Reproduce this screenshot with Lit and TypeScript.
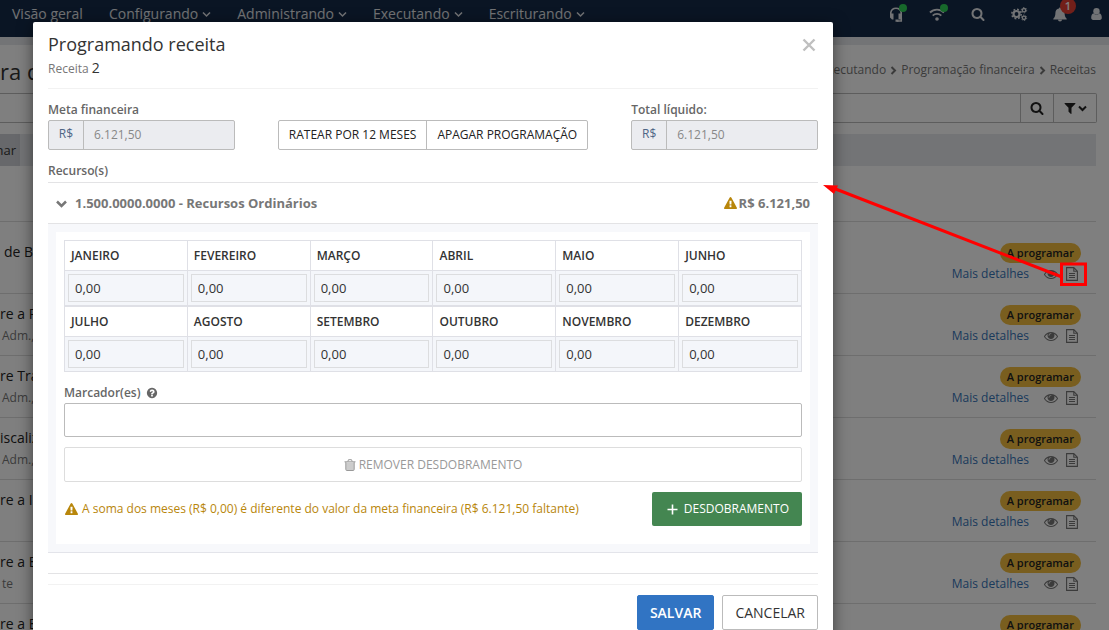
import { LitElement, html, css, svg, nothing } from "lit";
import { customElement } from "lit/decorators.js";

const PATHS: Record<string, string> = {
  search:
    "M1216 832q0-185-131.500-316.500T768 384 451.500 515.500 320 832t131.500 316.500T768 1280t316.500-131.500T1216 832zm512 832q0 52-38 90t-90 38q-54 0-90-38l-343-342q-179 124-399 124-143 0-273.500-55.500t-225-150-150-225T64 832t55.500-273.500 150-225 225-150T768 128t273.500 55.500 225 150 150 225T1472 832q0 220-124 399l343 343q37 37 37 90z",
  eye: "M1664 960q-152-236-381-353 61 104 61 225 0 185-131.500 316.500T896 1280t-316.500-131.500T448 832q0-121 61-225-229 117-381 353 133 205 333.500 326.500T896 1408t434.500-121.500T1664 960zm-720-384q0-20-14-34t-34-14q-125 0-214.500 89.500T592 832q0 20 14 34t34 14 34-14 14-34q0-86 61-147t147-61q20 0 34-14t14-34zm848 384q0 34-20 69-140 230-376.500 368.500T896 1536t-499.500-139T20 1029q-20-35-20-69t20-69q140-229 376.500-368T896 384t499.500 139T1772 891q20 35 20 69z",
  filter:
    "M1595 295q17 41-14 70l-493 493v742q0 42-39 59-13 5-25 5-27 0-45-19l-256-256q-19-19-19-45V858L211 365q-31-29-14-70 17-39 59-39h1280q42 0 59 39z",
  warning:
    "M1024 1375v-190q0-14-9.500-23.500t-22.500-9.500h-192q-13 0-22.500 9.500t-9.500 23.500v190q0 14 9.500 23.500t22.500 9.500h192q13 0 22.500-9.500t9.500-23.500zm-2-374l18-459q0-12-10-19-13-11-24-11h-220q-11 0-24 11-10 7-10 21l17 457q0 10 10 16.500t24 6.500h185q14 0 23.500-6.500t10.500-16.500zm-14-934l768 1408q35 63-2 126-17 29-46.500 46t-63.500 17h-1536q-34 0-63.500-17t-46.500-46q-37-63-2-126l768-1408q17-31 47-49t65-18 65 18 47 49z",
  question:
    "M1024 1376v-192q0-14-9-23t-23-9h-192q-14 0-23 9t-9 23v192q0 14 9 23t23 9h192q14 0 23-9t9-23zm256-672q0-88-55.500-163t-138.500-116-170-41q-243 0-371 213-15 24 8 42l132 100q7 6 19 6 16 0 25-12 53-68 86-92 34-24 86-24 48 0 85.500 26t37.500 59q0 38-20 61t-68 45q-63 28-115.500 86.500t-52.500 125.500v36q0 14 9 23t23 9h192q14 0 23-9t9-23q0-19 21.500-49.500t54.500-49.500q32-18 49-28.500t46-35 44.500-48 28-60.500 12.500-81zm384 192q0 209-103 385.500t-279.500 279.500-385.500 103-385.500-103-279.500-279.500-103-385.500 103-385.500 279.500-279.500 385.500-103 385.500 103 279.500 279.500 103 385.500z",
};

const solid = (name: string, size = 14) => html`<svg
  class="icon" width=${size} height=${size} viewBox="0 0 1792 1792" fill="currentColor" aria-hidden="true"
><path d=${PATHS[name]}></path></svg>`;

const drawn = (body: unknown, w: number, h: number) => html`<svg
  class="icon" width=${w} height=${h} viewBox="0 0 ${w} ${h}" fill="none" stroke="currentColor" aria-hidden="true"
>${body}</svg>`;

const chevronDown = (w = 9, stroke = 1.5) =>
  drawn(svg`<path d="M1 1.500L${w / 2} ${w / 2 + 0.5}L${w - 1} 1.500" stroke-width=${stroke}></path>`, w, 7);
const chevronRight = () => drawn(svg`<path d="M1.500 1L5 4.500L1.500 8" stroke-width="2"></path>`, 7, 9);

const headset = () =>
  drawn(
    svg`<path d="M1.800 8.500V6.500a5.300 5.300 0 0 1 10.400 0V8.500" stroke-width="1.600"></path>
      <path d="M1 7.500h3.500v6H3L1 11.500zM9.500 7.500h3.500v6H9.500z" fill="currentColor" stroke="none"></path>
      <path d="M12.300 12v3H8" stroke-width="1.500"></path><path d="M6.500 13.500h3v2.300h-3z" fill="currentColor" stroke="none"></path>`,
    14, 16
  );
const wifi = () =>
  drawn(
    svg`<path d="M1 5.500a10 10 0 0 1 14 0" stroke-width="1.900"></path>
      <path d="M3.700 8.600a6.200 6.200 0 0 1 8.600 0" stroke-width="1.900"></path>
      <circle cx="8" cy="12" r="1.800" fill="currentColor" stroke="none"></circle>`,
    16, 15
  );
const cogs = () =>
  drawn(
    svg`<circle cx="5.500" cy="7" r="3" stroke-width="2.200"></circle>
      <circle cx="5.500" cy="7" r="4.700" stroke-width="1.500" stroke-dasharray="1.850 1.840"></circle>
      <circle cx="13" cy="3.200" r="1.700" stroke-width="1.400"></circle>
      <circle cx="13" cy="3.200" r="2.700" stroke-width="0.900" stroke-dasharray="1.400 1.430"></circle>
      <circle cx="13" cy="10.800" r="1.700" stroke-width="1.400"></circle>
      <circle cx="13" cy="10.800" r="2.700" stroke-width="0.900" stroke-dasharray="1.400 1.430"></circle>`,
    16, 14
  );
const bell = () =>
  drawn(
    svg`<path d="M7 0.500c.7 0 1 .4 1 1 2.500.5 3.600 2.300 3.600 4.500 0 3 .8 4.600 2.100 5.700v.8H.3v-.8C1.600 10.600 2.400 9 2.400 6c0-2.200 1.100-4 3.600-4.500 0-.6.300-1 1-1zM5 12.800h4a2 1.700 0 0 1-4 0z" fill="currentColor" stroke="none"></path>`,
    14, 15
  );
const user = () =>
  drawn(
    svg`<circle cx="5.500" cy="3.300" r="3.200" fill="currentColor" stroke="none"></circle>
      <path d="M2.300 5.200C.8 5.800.2 7.500.2 9.800c0 1.300.8 2.200 2 2.200h6.600c1.200 0 2-.9 2-2.200 0-2.300-.6-4-2.100-4.600-1.700 1.700-4.700 1.700-6.400 0z" fill="currentColor" stroke="none"></path>`,
    11, 12
  );
const documentIcon = () =>
  drawn(
    svg`<path d="M.6.600h7.200L11.400 4.200V13.400H.6zM7.800.600V4.200h3.600M3 6.500h6M3 8.500h6M3 10.500h6" stroke-width="1.100"></path>`,
    12, 14
  );
const trash = () =>
  drawn(
    svg`<path d="M2 3.500h8v7.500h-8z" fill="currentColor" fill-opacity=".5" stroke="none"></path>
      <path d="M.5 2.800h11M3.800 2.500L4.500.7h3l.7 1.800M1.800 3v7.500q0 1 1 1h6.400q1 0 1-1V3" stroke-width="1"></path>`,
    12, 12
  );
const plus = () => drawn(svg`<path d="M5.500 .5v10M.5 5.500h10" stroke-width="1.600"></path>`, 11, 11);
const cross = () => drawn(svg`<path d="M1.500 1.500l11 11M12.500 1.500l-11 11" stroke-width="2.400"></path>`, 14, 14);

const MENUS = ["Configurando", "Administrando", "Executando", "Escriturando"];
const MONTHS = [
  ["JANEIRO", "FEVEREIRO", "MARÇO", "ABRIL", "MAIO", "JUNHO"],
  ["JULHO", "AGOSTO", "SETEMBRO", "OUTUBRO", "NOVEMBRO", "DEZEMBRO"],
];
const ROWS = [
  { title: "de B", detail: "" },
  { title: "re a P", detail: "Adm.," },
  { title: "re Tra", detail: "Adm.," },
  { title: "iscaliz", detail: "Adm.," },
  { title: "re a In", detail: "" },
  { title: "re a E", detail: "te" },
  { title: "re a E", detail: "" },
];

const shared = css`
  * { box-sizing: border-box; }
  .icon { display: block; flex: none; overflow: visible; }
  button, input { font: inherit; color: inherit; margin: 0; }
  button { cursor: pointer; display: inline-flex; align-items: center; justify-content: center; background: none; border: 0; padding: 0; }
  a { text-decoration: none; color: inherit; }
  p, h1, h2, h3 { margin: 0; font-weight: 400; }
`;

@customElement("finance-page")
export class FinancePage extends LitElement {
  static styles = [
    shared,
    css`
      :host { display: block; color: #333; font-size: 12px; line-height: 16px; }
      .nav { display: flex; justify-content: space-between; height: 37px; padding: 0 5px 0 12px; background: #142b49; color: #e4e6ea; }
      .menus { display: flex; gap: 26px; font-size: 14px; line-height: 28px; }
      .menus a { display: flex; align-items: center; gap: 4px; height: 28px; }
      .tools { display: flex; align-items: flex-start; gap: 17px; }
      .tool { position: relative; width: 24px; height: 28px; }
      .tool.last { width: 15px; }
      .dot { position: absolute; top: 4px; right: 1px; width: 8px; height: 8px; border-radius: 50%; background: #2fd256; }
      .count { position: absolute; top: -2px; right: -4px; width: 16px; height: 16px; border-radius: 50%; background: #e53e33; color: #fff; font-size: 11px; font-weight: 600; line-height: 16px; }
      .band { height: 8px; background: #e6e8ec; }
      .head { display: flex; justify-content: space-between; align-items: center; height: 48px; padding-right: 13px; }
      .head h1 { font-size: 22px; line-height: 30px; padding-top: 4px; }
      .crumbs { display: flex; align-items: center; gap: 4px; padding-top: 2px; color: #777; }
      .search { display: flex; margin-right: 12px; height: 30px; border: 1px solid #bbb; border-left: 0; border-radius: 0 2px 2px 0; }
      .search input { flex: 1; min-width: 0; border: 0; background: none; padding: 0 10px; }
      .search button { width: 33px; border-left: 1px solid #bbb; color: #222; }
      .search .filter { width: 43px; gap: 1px; }
      .tabs { display: flex; margin: 11px 13px 0 0; height: 32px; background: #e6e8ed; }
      .tabs button { width: 20px; background: #ced1d6; justify-content: flex-end; padding-right: 4px; font-size: 13px; }
      .list { margin: 55px 13px 0 0; padding: 0; list-style: none; }
      .row { display: flex; justify-content: space-between; height: 62px; padding-top: 11px; border-top: 1px solid #dcdcdc; }
      .row:first-child { height: 72px; padding-top: 21px; }
      .title { font-size: 14px; line-height: 18px; color: #222; white-space: nowrap; }
      .row:first-child .title { padding-left: 4px; }
      .detail { line-height: 25px; color: #777; padding-left: 2px; }
      .side { display: flex; flex-direction: column; align-items: flex-end; padding-right: 15px; }
      .badge { height: 20px; padding: 0 7px; border-radius: 10px; background: #f2bd3e; color: #222; font-size: 11px; font-weight: 600; line-height: 20px; }
      .actions { display: flex; align-items: center; height: 22px; padding-right: 3px; color: #777; }
      .actions a { color: #3674b8; padding-right: 15px; }
      .actions .view { margin-right: 8px; }
    `,
  ];

  render() {
    return html`
      <nav class="nav">
        <div class="menus">
          <a href="#">Visão geral</a>
          ${MENUS.map((m) => html`<a href="#">${m}${chevronDown()}</a>`)}
        </div>
        <div class="tools">
          <button class="tool" aria-label="Suporte">${headset()}<span class="dot"></span></button>
          <button class="tool" aria-label="Conexão">${wifi()}<span class="dot"></span></button>
          <button class="tool" aria-label="Buscar">${solid("search")}</button>
          <button class="tool" aria-label="Configurações">${cogs()}</button>
          <button class="tool" aria-label="Notificações">${bell()}<span class="count">1</span></button>
          <button class="tool last" aria-label="Usuário">${user()}</button>
        </div>
      </nav>
      <div class="band"></div>
      <header class="head">
        <h1>ra d</h1>
        <div class="crumbs">
          <a href="#">Executando</a>${chevronRight()}<a href="#">Programação financeira</a>${chevronRight()}<span>Receitas</span>
        </div>
      </header>
      <div class="search">
        <input type="search" aria-label="Pesquisar" />
        <button aria-label="Pesquisar">${solid("search")}</button>
        <button class="filter" aria-label="Filtrar">${solid("filter")}${chevronDown(9, 2)}</button>
      </div>
      <div class="tabs"><button>nar</button></div>
      <ul class="list">
        ${ROWS.map(
          (r) => html`<li class="row">
            <div>
              <p class="title">${r.title}</p>
              ${r.detail ? html`<p class="detail">${r.detail}</p>` : nothing}
            </div>
            <div class="side">
              <span class="badge">A programar</span>
              <div class="actions">
                <a href="#">Mais detalhes</a>
                <button class="view" aria-label="Visualizar">${solid("eye")}</button>
                <button aria-label="Programar">${documentIcon()}</button>
              </div>
            </div>
          </li>`
        )}
      </ul>
    `;
  }
}

@customElement("revenue-dialog")
export class RevenueDialog extends LitElement {
  static styles = [
    shared,
    css`
      :host { display: block; padding: 0 15px; background: #fff; border-radius: 2px; box-shadow: 0 3px 15px rgba(0, 0, 0, 0.5); color: #333; font-size: 12px; line-height: 16px; }
      .header { display: flex; justify-content: space-between; align-items: flex-start; height: 67px; padding-top: 10px; border-bottom: 1px solid #f2f2f2; }
      .header h2 { font-size: 18px; line-height: 24px; }
      .sub { color: #777; line-height: 24px; }
      .sub span { font-size: 14px; color: #333; }
      .close { color: #bfbfbf; width: 18px; height: 26px; }
      .top { display: grid; grid-template-columns: 1fr auto 1fr; gap: 43px; align-items: end; padding-top: 13px; }
      .label { display: flex; align-items: center; gap: 6px; height: 18px; padding-bottom: 2px; font-size: 12px; font-weight: 600; color: #666; }
      .money { display: flex; height: 30px; border: 1px solid #bbb; border-radius: 2px; background: #ebecf0; }
      .money span { width: 35px; border-right: 1px solid #bbb; text-align: center; line-height: 26px; color: #4e6585; }
      .money input { flex: 1; width: 0; border: 0; background: none; padding: 0 10px; color: #888; }
      .pair { display: flex; height: 30px; border: 1px solid #bbb; border-radius: 2px; }
      .pair button { padding: 0 10px; color: #222; }
      .pair button + button { border-left: 1px solid #bbb; }
      .resources { margin-top: 12px; height: 21px; border-bottom: 1px solid #e3e3e5; }
      .group { display: flex; justify-content: space-between; align-items: center; height: 41px; padding: 0 8px; border-bottom: 1px solid #e3e3e5; font-size: 13px; font-weight: 700; color: #777; }
      .group button { gap: 8px; }
      .sum { display: flex; align-items: center; gap: 2px; }
      .gold { color: #b8860b; }
      .panel { padding: 8px; background: #f7f8fb; border-bottom: 1px solid #e3e4ea; }
      .card { padding: 8px 8px 18px; background: #fff; }
      table { width: 100%; table-layout: fixed; border-collapse: collapse; }
      th, td { border: 1px solid #dfe0e6; }
      th { height: 30px; padding: 0 6px; text-align: left; font-weight: 600; }
      td { height: 35px; padding: 3px; background: #f4f6fa; }
      td input { display: block; width: 100%; height: 28px; padding: 0 6px; border: 1px solid #dcdddf; background: transparent; font-size: 13px; }
      .markers { margin-top: 13px; }
      .wide { display: flex; width: 100%; height: 34px; border: 1px solid #bbb; border-radius: 2px; background: #fff; padding: 0 10px; }
      .remove { gap: 3px; margin-top: 10px; height: 35px; border-color: #ddd; color: #999; }
      .foot { display: flex; justify-content: space-between; align-items: center; margin-top: 10px; }
      .alert { display: flex; align-items: center; gap: 4px; padding-left: 1px; }
      .add { height: 34px; padding: 0 13px 0 15px; gap: 6px; border-radius: 2px; background: #448651; color: #fff; }
      .rule { height: 21px; border-bottom: 1px solid #e3e3e5; }
      .footer { display: flex; justify-content: flex-end; gap: 8px; margin-top: 10px; padding: 10px 0 15px; border-top: 1px solid #f2f2f2; }
      .footer button { height: 35px; padding: 0 12px; border: 1px solid #bbb; border-radius: 2px; font-size: 14px; color: #333; }
      .footer .save { border-color: #3174c3; background: #3174c3; color: #fff; font-weight: 600; }
    `,
  ];

  render() {
    return html`
      <header class="header">
        <div>
          <h2>Programando receita</h2>
          <p class="sub">Receita <span>2</span></p>
        </div>
        <button class="close" aria-label="Fechar">${cross()}</button>
      </header>
      <div class="top">
        <div>
          <label class="label" for="goal">Meta financeira</label>
          <div class="money"><span>R$</span><input id="goal" value="6.121,50" disabled /></div>
        </div>
        <div class="pair">
          <button>RATEAR POR 12 MESES</button>
          <button>APAGAR PROGRAMAÇÃO</button>
        </div>
        <div>
          <label class="label" for="total">Total líquido:</label>
          <div class="money"><span>R$</span><input id="total" value="6.121,50" disabled /></div>
        </div>
      </div>
      <h3 class="label resources">Recurso(s)</h3>
      <div class="group">
        <button aria-expanded="true">${chevronDown(11, 2.5)}1.500.0000.0000 - Recursos Ordinários</button>
        <span class="sum"><span class="gold">${solid("warning", 13)}</span>R$ 6.121,50</span>
      </div>
      <div class="panel">
        <div class="card">
          ${MONTHS.map(
            (half) => html`<table>
              <thead><tr>${half.map((m) => html`<th scope="col">${m}</th>`)}</tr></thead>
              <tbody><tr>${half.map((m) => html`<td><input aria-label=${m} value="0,00" /></td>`)}</tr></tbody>
            </table>`
          )}
          <label class="label markers" for="markers">Marcador(es) ${solid("question", 12)}</label>
          <input class="wide" id="markers" />
          <button class="wide remove" disabled>${trash()}REMOVER DESDOBRAMENTO</button>
          <div class="foot">
            <p class="alert gold">${solid("warning", 13)}A soma dos meses (R$ 0,00) é diferente do valor da meta financeira (R$ 6.121,50 faltante)</p>
            <button class="add">${plus()}DESDOBRAMENTO</button>
          </div>
        </div>
      </div>
      <div class="rule"></div>
      <footer class="footer">
        <button class="save">SALVAR</button>
        <button>CANCELAR</button>
      </footer>
    `;
  }
}

@customElement("app-root")
export class AppRoot extends LitElement {
  static styles = css`
    :host { display: block; position: relative; height: 100vh; overflow: hidden; background: #fff; font-family: "Open Sans", "Noto Sans", sans-serif; }
    .backdrop { position: absolute; inset: 0; padding: 22px 276px 0 33px; background: rgba(0, 0, 0, 0.5); }
    .callout { position: absolute; top: 180px; right: 20px; }
  `;

  render() {
    return html`
      <finance-page></finance-page>
      <div class="backdrop"><revenue-dialog role="dialog" aria-label="Programando receita"></revenue-dialog></div>
      <svg class="callout" width="270" height="110" viewBox="0 0 270 110" fill="none" stroke="#f00" aria-hidden="true">
        <path d="M243 97L14 8" stroke-width="3"></path>
        <path d="M4 5L19 5.500L15 14z" fill="#f00" stroke="none"></path>
        <rect x="242.500" y="84" width="24" height="20.500" stroke-width="3"></rect>
      </svg>
    `;
  }
}
